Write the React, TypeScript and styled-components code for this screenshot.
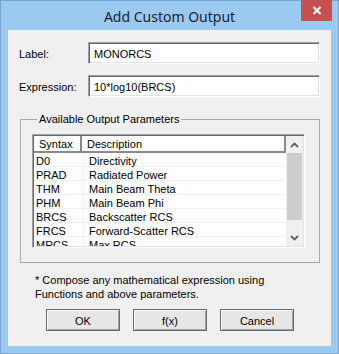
import React from 'react';
import styled, { createGlobalStyle } from 'styled-components';

const GlobalStyle = createGlobalStyle`
  html, body {
    margin: 0;
    padding: 0;
    background: #9bc9ef;
  }
  * {
    box-sizing: border-box;
  }
`;

const Frame = styled.div`
  width: 339px;
  height: 354px;
  background: #9bc9ef;
  border: 1px solid #7ba5d3;
  display: flex;
  flex-direction: column;
  font-family: "Liberation Sans", Arial, sans-serif;
  font-size: 11px;
  color: #000;
`;

const TitleBar = styled.div`
  position: relative;
  height: 29px;
  display: flex;
  align-items: center;
  justify-content: center;
  font-family: "Noto Sans", "Open Sans", sans-serif;
  font-size: 14px;
  color: #1e2330;
  padding-top: 1px;
`;

const CloseButton = styled.div`
  position: absolute;
  top: -1px;
  right: 6px;
  width: 31px;
  height: 21px;
  background: #c75050;
  display: flex;
  align-items: center;
  justify-content: center;
`;

const Client = styled.div`
  flex: 1;
  margin: 0 7px 7px;
  background: #f0f0f0;
  display: flex;
  flex-direction: column;
  padding: 12px 0 0 11px;
`;

const FieldRow = styled.div<{ gap?: number }>`
  display: flex;
  align-items: center;
  margin-bottom: ${({ gap }) => gap ?? 0}px;
`;

const FieldLabel = styled.label`
  width: 69px;
  padding-top: 2px;
`;

const TextBox = styled.div`
  width: 232px;
  height: 22px;
  background: #fff;
  border: 1px solid;
  border-color: #a0a0a0 #fff #fff #a0a0a0;
  box-shadow: inset 1px 1px 0 #696969, inset -1px -1px 0 #e3e3e3;
  padding: 2px 5px 0;
  display: flex;
  align-items: center;
`;

const Group = styled.fieldset`
  margin: 16px 0 0 1px;
  width: 300px;
  border: 1px solid #a9a9a9;
  padding: 8px 13px 14px 11px;
`;

const Legend = styled.legend`
  padding: 0 2px;
  margin-left: 5px;
  line-height: 13px;
`;

const ListView = styled.div`
  width: 273px;
  height: 114px;
  border: 1px solid;
  border-color: #a0a0a0 #fff #fff #a0a0a0;
  box-shadow: inset 1px 1px 0 #696969, inset -1px -1px 0 #e3e3e3;
  padding: 1px;
  background: #fff;
  display: grid;
  grid-template-columns: 1fr 17px;
  overflow: hidden;
`;

const Columns = styled.div`
  display: flex;
  flex-direction: column;
  overflow: hidden;
`;

const HeaderRow = styled.div`
  display: grid;
  grid-template-columns: 48px 1fr;
  height: 17px;
  flex-shrink: 0;
`;

const HeaderCell = styled.div`
  border-right: 2px solid #8a8a8a;
  border-bottom: 2px solid #8a8a8a;
  padding: 1px 0 0 5px;
  display: flex;
  align-items: center;
  color: #000;
`;

const Row = styled.div`
  display: grid;
  grid-template-columns: 49px 1fr;
  height: 14px;
  flex-shrink: 0;
  border-bottom: 1px solid #f0f0f0;
`;

const Cell = styled.div<{ pad: number }>`
  padding: 2px 0 0 ${({ pad }) => pad}px;
  display: flex;
  align-items: center;
  white-space: nowrap;
  & + & {
    border-left: 1px solid #f0f0f0;
  }
`;

const ScrollBar = styled.div`
  background: #f0f0f0;
  display: flex;
  flex-direction: column;
`;

const ScrollArrow = styled.div`
  height: 17px;
  display: flex;
  align-items: center;
  justify-content: center;
  flex-shrink: 0;
`;

const ScrollTrack = styled.div`
  flex: 1;
  padding: 0 1px;
`;

const ScrollThumb = styled.div`
  height: 67px;
  background: #cdcdcd;
`;

const Note = styled.div`
  margin: 10px 0 0 16px;
  line-height: 14px;
`;

const ButtonRow = styled.div`
  display: flex;
  gap: 13px;
  margin: 8px 0 0 27px;
`;

const Button = styled.button`
  width: 74px;
  height: 22px;
  font-family: "Liberation Sans", Arial, sans-serif;
  font-size: 11px;
  color: #000;
  background: #e6e6e6;
  border: 1px solid #6a6a6a;
  box-shadow: inset 1px 1px 0 #fdfdfd, inset -1px -1px 0 #a0a0a0;
  padding: 1px 0 0;
`;

const params: [string, string][] = [
  ['D0', 'Directivity'],
  ['PRAD', 'Radiated Power'],
  ['THM', 'Main Beam Theta'],
  ['PHM', 'Main Beam Phi'],
  ['BRCS', 'Backscatter RCS'],
  ['FRCS', 'Forward-Scatter RCS'],
  ['MRCS', 'Max RCS'],
];

const Chevron = ({ up }: { up: boolean }) => (
  <svg width="9" height="6" viewBox="0 0 9 6">
    <polyline
      points={up ? '1,5 4.5,1.5 8,5' : '1,1 4.5,4.5 8,1'}
      fill="none"
      stroke="#606060"
      strokeWidth="1.8"
    />
  </svg>
);

export default function App() {
  return (
    <>
      <GlobalStyle />
      <Frame>
        <TitleBar>
          Add Custom Output
          <CloseButton>
            <svg width="10" height="9" viewBox="0 0 10 9">
              <path d="M1.5 1 L8.5 8 M8.5 1 L1.5 8" stroke="#fff" strokeWidth="2" />
            </svg>
          </CloseButton>
        </TitleBar>
        <Client>
          <FieldRow gap={11}>
            <FieldLabel>Label:</FieldLabel>
            <TextBox>MONORCS</TextBox>
          </FieldRow>
          <FieldRow>
            <FieldLabel>Expression:</FieldLabel>
            <TextBox>10*log10(BRCS)</TextBox>
          </FieldRow>
          <Group>
            <Legend>Available Output Parameters</Legend>
            <ListView>
              <Columns>
                <HeaderRow>
                  <HeaderCell>Syntax</HeaderCell>
                  <HeaderCell>Description</HeaderCell>
                </HeaderRow>
                {params.map(([syntax, desc]) => (
                  <Row key={syntax}>
                    <Cell pad={2}>{syntax}</Cell>
                    <Cell pad={5}>{desc}</Cell>
                  </Row>
                ))}
              </Columns>
              <ScrollBar>
                <ScrollArrow>
                  <Chevron up />
                </ScrollArrow>
                <ScrollTrack>
                  <ScrollThumb />
                </ScrollTrack>
                <ScrollArrow>
                  <Chevron up={false} />
                </ScrollArrow>
              </ScrollBar>
            </ListView>
          </Group>
          <Note>
            * Compose any mathematical expression using
            <br />
            Functions and above parameters.
          </Note>
          <ButtonRow>
            <Button>OK</Button>
            <Button>f(x)</Button>
            <Button>Cancel</Button>
          </ButtonRow>
        </Client>
      </Frame>
    </>
  );
}
